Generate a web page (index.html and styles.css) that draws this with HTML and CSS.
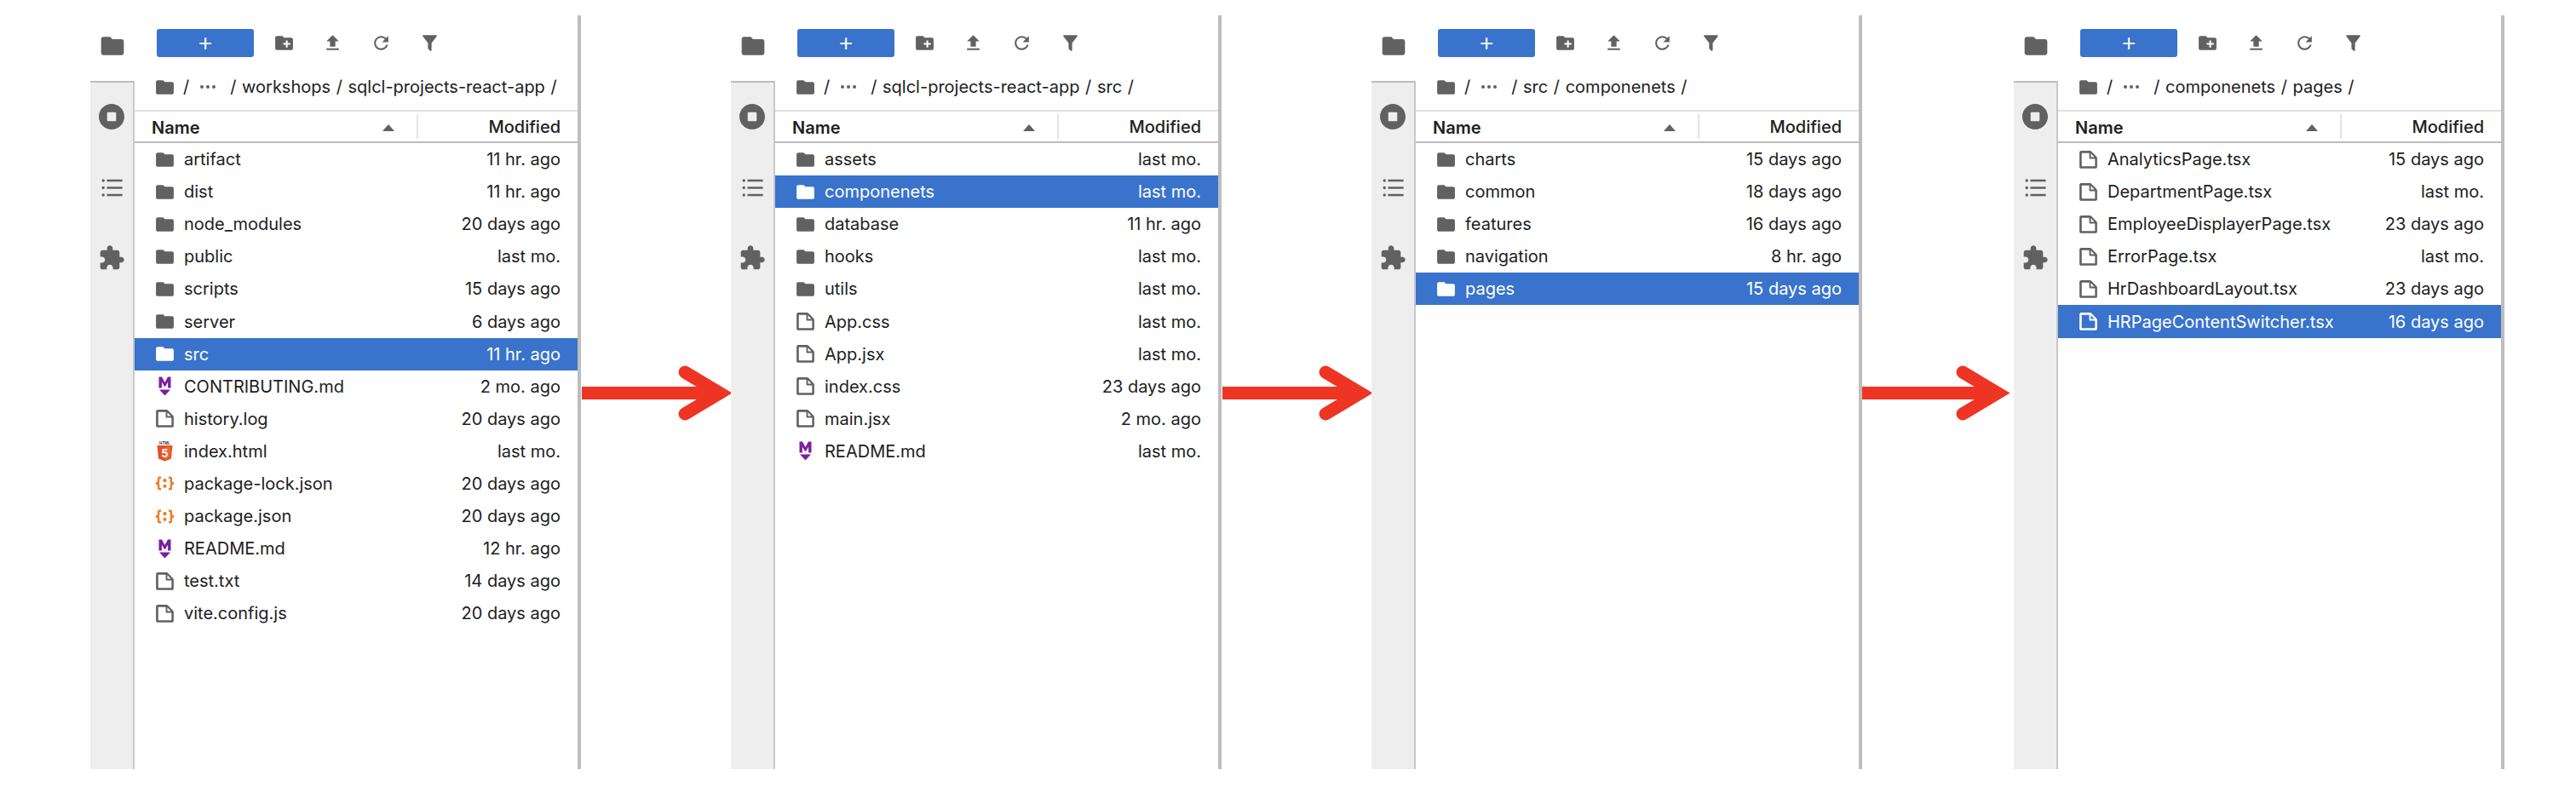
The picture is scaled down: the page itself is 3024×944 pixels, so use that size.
FILE: index.html
```html
<!DOCTYPE html>
<html lang="en">
<head>
    <meta charset="UTF-8">
    <meta name="viewport" content="width=device-width, initial-scale=1.0">
    <title>File browser steps</title>
    <link rel="stylesheet" href="styles.css">
</head>
<body>

    <!-- icon sheet -->
    <svg class="sheet" aria-hidden="true">
        <symbol id="i-folder" viewBox="0 0 24 24"><path d="M10 4H4c-1.1 0-1.99.9-1.99 2L2 18c0 1.1.9 2 2 2h16c1.1 0 2-.9 2-2V8c0-1.1-.9-2-2-2h-8l-2-2z"/></symbol>
        <symbol id="i-newfolder" viewBox="0 0 24 24"><path d="M20 6h-8l-2-2H4c-1.11 0-1.99.89-1.99 2L2 18c0 1.11.89 2 2 2h16c1.11 0 2-.89 2-2V8c0-1.11-.89-2-2-2zm-1 8h-3v3h-2v-3h-3v-2h3V9h2v3h3v2z"/></symbol>
        <symbol id="i-upload" viewBox="0 0 24 24"><path d="M9 16h6v-6h4l-7-7-7 7h4zm-4 2h14v2H5z"/></symbol>
        <symbol id="i-refresh" viewBox="0 0 24 24"><path d="M17.65 6.35C16.2 4.9 14.21 4 12 4c-4.42 0-7.99 3.58-7.99 8s3.57 8 7.99 8c3.73 0 6.84-2.55 7.73-6h-2.08c-.82 2.33-3.04 4-5.65 4-3.31 0-6-2.69-6-6s2.69-6 6-6c1.66 0 3.14.69 4.22 1.78L13 11h7V4l-2.35 2.35z"/></symbol>
        <symbol id="i-filter" viewBox="0 0 24 24"><path d="M14 12v7.88c.04.3-.06.62-.29.83-.39.39-1.02.39-1.41 0l-2.01-2.01c-.23-.23-.33-.54-.29-.83V12h-.03L4.21 4.62c-.34-.43-.26-1.06.17-1.4.19-.14.4-.22.62-.22h14c.22 0 .43.08.62.22.43.34.51.97.17 1.4L14.03 12H14z"/></symbol>
        <symbol id="i-stop" viewBox="0 0 24 24"><path fill-rule="evenodd" d="M12 2C6.48 2 2 6.48 2 12s4.48 10 10 10 10-4.48 10-10S17.52 2 12 2zm-3 6.5h6c.3 0 .5.2.5.5v6c0 .3-.2.5-.5.5H9c-.3 0-.5-.2-.5-.5V9c0-.3.2-.5.5-.5z"/></symbol>
        <symbol id="i-list" viewBox="0 0 24 24"><path d="M7 4h15v2H7zM7 11h15v2H7zM7 18h15v2H7z"/><circle cx="3.5" cy="5" r="1.4"/><circle cx="3.5" cy="12" r="1.4"/><circle cx="3.5" cy="19" r="1.4"/></symbol>
        <symbol id="i-puzzle" viewBox="0 0 24 24"><path d="M20.5 11H19V7c0-1.1-.9-2-2-2h-4V3.5C13 2.12 11.88 1 10.5 1S8 2.12 8 3.5V5H4c-1.1 0-1.99.9-1.99 2v3.8H3.5c1.49 0 2.7 1.21 2.7 2.7s-1.21 2.7-2.7 2.7H2V20c0 1.1.9 2 2 2h3.8v-1.5c0-1.49 1.21-2.7 2.7-2.7 1.49 0 2.7 1.21 2.7 2.7V22H17c1.1 0 2-.9 2-2v-4h1.5c1.38 0 2.5-1.12 2.5-2.5S21.88 11 20.5 11z"/></symbol>
        <symbol id="i-file" viewBox="0.5 0.5 21 21"><path d="M19.3 8.2l-5.5-5.5c-.3-.3-.7-.5-1.2-.5H3.9c-.8.1-1.6.9-1.6 1.8v14.1c0 .9.7 1.6 1.6 1.6h14.2c.9 0 1.6-.7 1.6-1.6V9.4c.1-.5-.1-.9-.4-1.2zm-5.8-3.3l3.4 3.6h-3.4V4.9zm3.9 12.7H4.7c-.1 0-.2 0-.2-.2V4.7c0-.2.1-.3.2-.3h7.2v4.4s0 .8.3 1.1c.3.3 1.1.3 1.1.3h4.3v7.2s-.1.2-.2.2z"/></symbol>
        <symbol id="i-md" viewBox="0 0 25 25"><path fill="#7b1fa2" d="M5.500 1.500h3.500l3.500 6.500 3.500-6.500h3.500v13h-3.400V7.500l-3 5.300h-1.200l-3-5.300v7H5.500zM6 16.500h13l-6.500 7z"/></symbol>
        <symbol id="i-html" viewBox="0 0 25 25">
            <text class="html-tag" x="12.5" y="4.6" text-anchor="middle">HTML</text>
            <path fill="#e44d26" d="M3.5 6h18l-1.6 15.4-7.4 3.1-7.4-3.1z"/>
            <path fill="#f16529" d="M12.5 7.4v15.700l6-2.500 1.300-13.200z"/>
            <text class="html-five" x="12.5" y="20.3" text-anchor="middle">5</text>
        </symbol>
        <symbol id="i-json" viewBox="0 0 25 25">
            <g fill="none" stroke="#ef7d22" stroke-width="2.500" stroke-linejoin="miter" stroke-linecap="butt">
                <path d="M8 5.700H6.600c-1 0-1.500.5-1.500 1.500v3c0 1.300-.8 2.300-3.300 2.300 2.500 0 3.300 1 3.300 2.300v3c0 1 .5 1.500 1.500 1.500H8"/>
                <path d="M17 5.700h1.400c1 0 1.500.5 1.500 1.500v3c0 1.300.8 2.300 3.300 2.300-2.500 0-3.300 1-3.300 2.300v3c0 1-.5 1.500-1.500 1.500H17"/>
            </g>
            <circle cx="12.500" cy="9.200" r="2.100" fill="#ef7d22"/>
            <circle cx="12.500" cy="15.800" r="2.100" fill="#ef7d22"/>
        </symbol>
    </svg>

    <div class="page">

        <!-- step 1 -->
        <div class="panel">
            <div class="rail">
                <div class="rail-top"><svg class="ic ic-rail"><use href="#i-folder"/></svg></div>
                <div class="rail-body">
                    <svg class="ic ic-stop"><use href="#i-stop"/></svg>
                    <svg class="ic ic-list"><use href="#i-list"/></svg>
                    <svg class="ic ic-puzzle"><use href="#i-puzzle"/></svg>
                </div>
            </div>
            <div class="browser">
                <div class="toolbar">
                    <div class="new-btn">+</div>
                    <div class="tool"><svg class="ic"><use href="#i-newfolder"/></svg></div>
                    <div class="tool"><svg class="ic"><use href="#i-upload"/></svg></div>
                    <div class="tool"><svg class="ic"><use href="#i-refresh"/></svg></div>
                    <div class="tool"><svg class="ic"><use href="#i-filter"/></svg></div>
                </div>
                <div class="crumbs">
                    <svg class="ic"><use href="#i-folder"/></svg>
                    <span class="crumb-root">/</span>
                    <span class="dots"><i></i><i></i><i></i></span>
                    <span>/ workshops / sqlcl-projects-react-app /</span>
                </div>
                <div class="list-head">
                    <div class="col-name">Name<span class="caret"></span></div>
                    <div class="col-mod">Modified</div>
                </div>
                <div class="row"><svg class="ic"><use href="#i-folder"/></svg><span class="name">artifact</span><span class="when">11 hr. ago</span></div>
                <div class="row"><svg class="ic"><use href="#i-folder"/></svg><span class="name">dist</span><span class="when">11 hr. ago</span></div>
                <div class="row"><svg class="ic"><use href="#i-folder"/></svg><span class="name">node_modules</span><span class="when">20 days ago</span></div>
                <div class="row"><svg class="ic"><use href="#i-folder"/></svg><span class="name">public</span><span class="when">last mo.</span></div>
                <div class="row"><svg class="ic"><use href="#i-folder"/></svg><span class="name">scripts</span><span class="when">15 days ago</span></div>
                <div class="row"><svg class="ic"><use href="#i-folder"/></svg><span class="name">server</span><span class="when">6 days ago</span></div>
                <div class="row selected"><svg class="ic"><use href="#i-folder"/></svg><span class="name">src</span><span class="when">11 hr. ago</span></div>
                <div class="row"><svg class="ic"><use href="#i-md"/></svg><span class="name">CONTRIBUTING.md</span><span class="when">2 mo. ago</span></div>
                <div class="row"><svg class="ic"><use href="#i-file"/></svg><span class="name">history.log</span><span class="when">20 days ago</span></div>
                <div class="row"><svg class="ic"><use href="#i-html"/></svg><span class="name">index.html</span><span class="when">last mo.</span></div>
                <div class="row"><svg class="ic"><use href="#i-json"/></svg><span class="name">package-lock.json</span><span class="when">20 days ago</span></div>
                <div class="row"><svg class="ic"><use href="#i-json"/></svg><span class="name">package.json</span><span class="when">20 days ago</span></div>
                <div class="row"><svg class="ic"><use href="#i-md"/></svg><span class="name">README.md</span><span class="when">12 hr. ago</span></div>
                <div class="row"><svg class="ic"><use href="#i-file"/></svg><span class="name">test.txt</span><span class="when">14 days ago</span></div>
                <div class="row"><svg class="ic"><use href="#i-file"/></svg><span class="name">vite.config.js</span><span class="when">20 days ago</span></div>
            </div>
        </div>

        <div class="arrow">
            <svg width="176" height="64"><rect x="1" y="24" width="150" height="15"/><polyline points="122,7 163,31.5 122,56"/></svg>
        </div>

        <!-- step 2 -->
        <div class="panel">
            <div class="rail">
                <div class="rail-top"><svg class="ic ic-rail"><use href="#i-folder"/></svg></div>
                <div class="rail-body">
                    <svg class="ic ic-stop"><use href="#i-stop"/></svg>
                    <svg class="ic ic-list"><use href="#i-list"/></svg>
                    <svg class="ic ic-puzzle"><use href="#i-puzzle"/></svg>
                </div>
            </div>
            <div class="browser">
                <div class="toolbar">
                    <div class="new-btn">+</div>
                    <div class="tool"><svg class="ic"><use href="#i-newfolder"/></svg></div>
                    <div class="tool"><svg class="ic"><use href="#i-upload"/></svg></div>
                    <div class="tool"><svg class="ic"><use href="#i-refresh"/></svg></div>
                    <div class="tool"><svg class="ic"><use href="#i-filter"/></svg></div>
                </div>
                <div class="crumbs">
                    <svg class="ic"><use href="#i-folder"/></svg>
                    <span class="crumb-root">/</span>
                    <span class="dots"><i></i><i></i><i></i></span>
                    <span>/ sqlcl-projects-react-app / src /</span>
                </div>
                <div class="list-head">
                    <div class="col-name">Name<span class="caret"></span></div>
                    <div class="col-mod">Modified</div>
                </div>
                <div class="row"><svg class="ic"><use href="#i-folder"/></svg><span class="name">assets</span><span class="when">last mo.</span></div>
                <div class="row selected"><svg class="ic"><use href="#i-folder"/></svg><span class="name">componenets</span><span class="when">last mo.</span></div>
                <div class="row"><svg class="ic"><use href="#i-folder"/></svg><span class="name">database</span><span class="when">11 hr. ago</span></div>
                <div class="row"><svg class="ic"><use href="#i-folder"/></svg><span class="name">hooks</span><span class="when">last mo.</span></div>
                <div class="row"><svg class="ic"><use href="#i-folder"/></svg><span class="name">utils</span><span class="when">last mo.</span></div>
                <div class="row"><svg class="ic"><use href="#i-file"/></svg><span class="name">App.css</span><span class="when">last mo.</span></div>
                <div class="row"><svg class="ic"><use href="#i-file"/></svg><span class="name">App.jsx</span><span class="when">last mo.</span></div>
                <div class="row"><svg class="ic"><use href="#i-file"/></svg><span class="name">index.css</span><span class="when">23 days ago</span></div>
                <div class="row"><svg class="ic"><use href="#i-file"/></svg><span class="name">main.jsx</span><span class="when">2 mo. ago</span></div>
                <div class="row"><svg class="ic"><use href="#i-md"/></svg><span class="name">README.md</span><span class="when">last mo.</span></div>
            </div>
        </div>

        <div class="arrow">
            <svg width="176" height="64"><rect x="1" y="24" width="150" height="15"/><polyline points="122,7 163,31.5 122,56"/></svg>
        </div>

        <!-- step 3 -->
        <div class="panel">
            <div class="rail">
                <div class="rail-top"><svg class="ic ic-rail"><use href="#i-folder"/></svg></div>
                <div class="rail-body">
                    <svg class="ic ic-stop"><use href="#i-stop"/></svg>
                    <svg class="ic ic-list"><use href="#i-list"/></svg>
                    <svg class="ic ic-puzzle"><use href="#i-puzzle"/></svg>
                </div>
            </div>
            <div class="browser">
                <div class="toolbar">
                    <div class="new-btn">+</div>
                    <div class="tool"><svg class="ic"><use href="#i-newfolder"/></svg></div>
                    <div class="tool"><svg class="ic"><use href="#i-upload"/></svg></div>
                    <div class="tool"><svg class="ic"><use href="#i-refresh"/></svg></div>
                    <div class="tool"><svg class="ic"><use href="#i-filter"/></svg></div>
                </div>
                <div class="crumbs">
                    <svg class="ic"><use href="#i-folder"/></svg>
                    <span class="crumb-root">/</span>
                    <span class="dots"><i></i><i></i><i></i></span>
                    <span>/ src / componenets /</span>
                </div>
                <div class="list-head">
                    <div class="col-name">Name<span class="caret"></span></div>
                    <div class="col-mod">Modified</div>
                </div>
                <div class="row"><svg class="ic"><use href="#i-folder"/></svg><span class="name">charts</span><span class="when">15 days ago</span></div>
                <div class="row"><svg class="ic"><use href="#i-folder"/></svg><span class="name">common</span><span class="when">18 days ago</span></div>
                <div class="row"><svg class="ic"><use href="#i-folder"/></svg><span class="name">features</span><span class="when">16 days ago</span></div>
                <div class="row"><svg class="ic"><use href="#i-folder"/></svg><span class="name">navigation</span><span class="when">8 hr. ago</span></div>
                <div class="row selected"><svg class="ic"><use href="#i-folder"/></svg><span class="name">pages</span><span class="when">15 days ago</span></div>
            </div>
        </div>

        <div class="arrow arrow-last">
            <svg width="176" height="64"><rect x="0" y="24" width="146" height="15"/><polyline points="118,7 159,31.5 118,56"/></svg>
        </div>

        <!-- step 4 -->
        <div class="panel">
            <div class="rail">
                <div class="rail-top"><svg class="ic ic-rail"><use href="#i-folder"/></svg></div>
                <div class="rail-body">
                    <svg class="ic ic-stop"><use href="#i-stop"/></svg>
                    <svg class="ic ic-list"><use href="#i-list"/></svg>
                    <svg class="ic ic-puzzle"><use href="#i-puzzle"/></svg>
                </div>
            </div>
            <div class="browser">
                <div class="toolbar">
                    <div class="new-btn">+</div>
                    <div class="tool"><svg class="ic"><use href="#i-newfolder"/></svg></div>
                    <div class="tool"><svg class="ic"><use href="#i-upload"/></svg></div>
                    <div class="tool"><svg class="ic"><use href="#i-refresh"/></svg></div>
                    <div class="tool"><svg class="ic"><use href="#i-filter"/></svg></div>
                </div>
                <div class="crumbs">
                    <svg class="ic"><use href="#i-folder"/></svg>
                    <span class="crumb-root">/</span>
                    <span class="dots"><i></i><i></i><i></i></span>
                    <span>/ componenets / pages /</span>
                </div>
                <div class="list-head">
                    <div class="col-name">Name<span class="caret"></span></div>
                    <div class="col-mod">Modified</div>
                </div>
                <div class="row"><svg class="ic"><use href="#i-file"/></svg><span class="name">AnalyticsPage.tsx</span><span class="when">15 days ago</span></div>
                <div class="row"><svg class="ic"><use href="#i-file"/></svg><span class="name">DepartmentPage.tsx</span><span class="when">last mo.</span></div>
                <div class="row"><svg class="ic"><use href="#i-file"/></svg><span class="name">EmployeeDisplayerPage.tsx</span><span class="when">23 days ago</span></div>
                <div class="row"><svg class="ic"><use href="#i-file"/></svg><span class="name">ErrorPage.tsx</span><span class="when">last mo.</span></div>
                <div class="row"><svg class="ic"><use href="#i-file"/></svg><span class="name">HrDashboardLayout.tsx</span><span class="when">23 days ago</span></div>
                <div class="row selected"><svg class="ic"><use href="#i-file"/></svg><span class="name">HRPageContentSwitcher.tsx</span><span class="when">16 days ago</span></div>
            </div>
        </div>

    </div>

</body>
</html>
```

FILE: styles.css
```css
html, body {
    margin: 0;
    padding: 0;
    background-color: #fff;
}
body {
    font-family: Inter, 'Liberation Sans', sans-serif;
    font-size: 20px;
    color: #212121;
}
.sheet {
    display: none;
}
.page {
    display: flex;
    height: 944px;
    padding: 18px 0 41px 106px;
    box-sizing: border-box;
    overflow: hidden;
}
.ic {
    width: 25px;
    height: 25px;
    flex-shrink: 0;
    fill: #616161;
}

/* one file browser */
.panel {
    display: flex;
    flex-shrink: 0;
    width: 576px;
    border-right: 4px solid #bdbdbd;
    box-sizing: border-box;
}
.rail {
    display: flex;
    flex-direction: column;
    width: 52px;
    flex-shrink: 0;
}
.rail-top {
    height: 77px;
    box-sizing: border-box;
    padding-top: 20px;
    display: flex;
    justify-content: center;
}
.ic-rail {
    width: 32px;
    height: 32px;
}
.rail-body {
    flex: 1;
    display: flex;
    flex-direction: column;
    align-items: center;
    background-color: #eeeeee;
    border-top: 2px solid #bdbdbd;
    border-right: 2px solid #c8c8c8;
    padding-top: 22px;
}
.ic-stop {
    width: 36px;
    height: 36px;
}
.ic-list {
    width: 29px;
    height: 29px;
    margin-top: 51px;
}
.ic-puzzle {
    width: 32px;
    height: 32px;
    margin-top: 52px;
}

.browser {
    flex: 1;
    display: flex;
    flex-direction: column;
    min-width: 0;
}
.toolbar {
    display: flex;
    align-items: center;
    height: 33px;
    margin-top: 16px;
    padding-left: 26px;
}
.new-btn {
    width: 114px;
    height: 33px;
    margin-right: 7px;
    background-color: #3973cc;
    border-radius: 3px;
    color: #fff;
    font-size: 30px;
    font-weight: 300;
    line-height: 31px;
    text-align: center;
}
.tool {
    width: 57px;
    display: flex;
    justify-content: center;
}

.crumbs {
    display: flex;
    align-items: center;
    height: 62px;
    box-sizing: border-box;
    padding: 23px 0 15px 23px;
    white-space: nowrap;
    word-spacing: 1px;
}
.crumb-root {
    margin-left: 9px;
}
.dots {
    display: flex;
    gap: 3px;
    margin: 0 17px 0 13px;
}
.dots i {
    width: 4px;
    height: 4px;
    border-radius: 50%;
    background-color: #616161;
}

.list-head {
    display: flex;
    height: 35px;
    flex-shrink: 0;
    border-top: 2px solid #e0e0e0;
    border-bottom: 2px solid #bdbdbd;
    font-weight: 500;
}
.col-name {
    display: flex;
    align-items: center;
    width: 333px;
    box-sizing: border-box;
    padding: 2px 26px 0 20px;
    margin: 3px 0;
    border-right: 2px solid #e4e4e4;
    font-weight: 600;
}
.caret {
    margin-left: auto;
    border-left: 7px solid transparent;
    border-right: 7px solid transparent;
    border-bottom: 8px solid #616161;
}
.col-mod {
    flex: 1;
    padding: 2px 20px 0 0;
    line-height: 33px;
    text-align: right;
}

.row {
    display: flex;
    align-items: center;
    height: 38.1px;
    padding: 0 20px 0 23px;
    white-space: nowrap;
}
.row .name {
    flex: 1;
    margin-left: 10px;
}
.selected {
    background-color: #3973cc;
    color: #fff;
}
.selected .ic {
    fill: #fff;
}

/* bits of text inside the file type icons */
.html-tag {
    font-family: 'Liberation Sans', sans-serif;
    font-size: 4.6px;
    font-weight: 700;
    fill: #333;
}
.html-five {
    font-family: 'Liberation Sans', sans-serif;
    font-size: 14px;
    font-weight: 700;
    fill: #fff;
}

/* red arrows between the steps */
.arrow {
    flex-shrink: 0;
    width: 176px;
    padding-top: 412px;
    box-sizing: border-box;
}
.arrow-last {
    width: 178px;
}
.arrow svg {
    display: block;
    overflow: visible;
}
.arrow rect {
    fill: #ee3524;
}
.arrow polyline {
    fill: none;
    stroke: #ee3524;
    stroke-width: 15px;
    stroke-linecap: round;
}
```
